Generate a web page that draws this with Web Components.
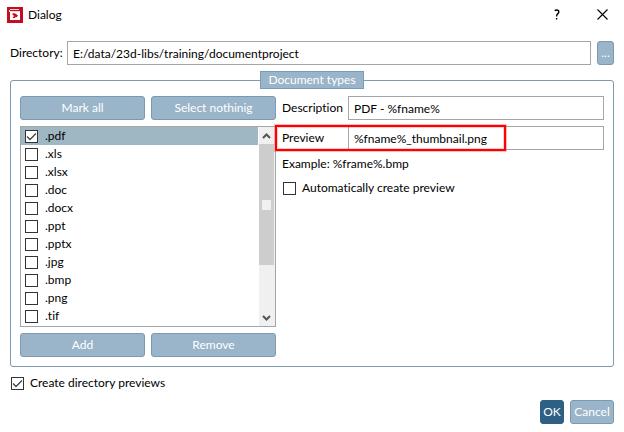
<!DOCTYPE html>
<html lang="en">
<head>
<meta charset="utf-8">
<title>Dialog</title>
<style>
html, body { margin: 0; height: 100%; background: #fff; }
body {
  font: 12px/16px Lato, "Open Sans", "Noto Sans", sans-serif; color: #000;
  font-variant-ligatures: none;
  --fill: #9ab4c9; --edge: #7a9ab1; --line: #a6a6a6;
}
</style>
</head>
<body>
<export-dialog></export-dialog>
<script>
const define = (name, html, setup) => {
  const template = document.createElement('template');
  template.innerHTML = '<style>*{box-sizing:border-box}</style>' + html;
  customElements.define(name, class extends HTMLElement {
    connectedCallback() {
      if (this.shadowRoot) return;
      const root = this.attachShadow({ mode: 'open' });
      root.append(template.content.cloneNode(true));
      if (setup) setup(this, root);
    }
  });
};

define('ui-button', `
<style>
:host { display: block; }
button { width: 100%; height: 24px; padding: 0; font: inherit; color: #fff; text-align: center;
  white-space: nowrap; background: var(--fill); border: 1px solid var(--edge); border-radius: 3px; }
:host([primary]) button { background: #2e6084; border-color: #2e6084; }
</style>
<button type="button"><slot></slot></button>`, (host, root) => {
  const label = host.getAttribute('label');
  if (label) root.querySelector('button').setAttribute('aria-label', label);
});

define('ui-check', `
<style>
:host { display: block; }
label { display: flex; align-items: center; gap: var(--check-gap, 6px); height: 18px; white-space: nowrap; }
input { appearance: none; width: 13px; height: 13px; margin: 0; border: 1px solid #333; background: #fff; }
span.box { display: grid; flex: none; }
span.box > * { grid-area: 1 / 1; }
svg { width: 13px; height: 13px; visibility: hidden; pointer-events: none; z-index: 1; }
input:checked + svg { visibility: visible; }
</style>
<label><span class="box"><input type="checkbox"><svg viewBox="0 0 13 13" aria-hidden="true"><path d="M2 6.5l3 3 6-6" fill="none" stroke="#444" stroke-width="1.3"/></svg></span><slot></slot></label>`,
(host, root) => { root.querySelector('input').checked = host.hasAttribute('checked'); });

define('ui-field', `
<style>
:host { display: block; }
.row { display: grid; grid-template-columns: var(--label-width, 60px) 1fr; column-gap: 6px; align-items: center; }
label { white-space: nowrap; }
input { width: 100%; min-width: 0; height: 24px; padding: 0 5px; font: inherit; font-variant-ligatures: inherit; color: inherit; background: #fff;
  border: 1px solid var(--line); border-radius: 0; outline: 0; }
</style>
<div class="row"><label for="f"></label><input id="f" type="text"></div>`, (host, root) => {
  root.querySelector('label').textContent = host.getAttribute('label');
  root.querySelector('input').value = host.getAttribute('value');
});

define('ui-titlebar', `
<style>
:host { display: flex; align-items: center; height: 29px; padding: 0 8px 0 7px; }
.logo { width: 16px; height: 16px; margin-right: 5px; }
.title { flex: 1; }
button { width: 28px; height: 28px; padding: 0; border: 0; background: none; display: grid; place-items: center; font: inherit; }
button:first-of-type { width: 62px; }
</style>
<svg class="logo" viewBox="0 0 16 16" aria-hidden="true"><path fill="#c30d20" d="M0 0h16v16H0z"/><path fill="#f6d5d8" d="M3 2h9v1H3zM2 3h1v2H2zM3 4h10v1H3z"/><path fill="#fff" d="M3 5h10v8H3z"/><path fill="#c30d20" d="M5 7l2-1 2 1 2 1.500L10 10H8.500L8 11H5.500L7 9z"/></svg>
<span class="title"><slot></slot></span>
<button type="button" aria-label="Help"><svg width="6" height="11" viewBox="0 0 6 11"><path d="M.7 1.600Q1.500 1 2.700 1Q4.800 1 4.800 2.800Q4.800 4 3.700 4.900Q2.600 5.800 2.600 7.500M2.600 9v1.500" fill="none" stroke="#000" stroke-width="1.400"/></svg></button>
<button type="button" aria-label="Close"><svg width="11" height="11" viewBox="0 0 11 11"><path d="M.5.5l10 10M10.500.5l-10 10" fill="none" stroke="#000" stroke-width="1.100"/></svg></button>`);

define('ui-group', `
<style>
:host { display: block; }
fieldset { margin: 0; min-width: 0; padding: 7px 9px 9px; border: 1px solid var(--edge); border-radius: 3px; }
legend { margin: 0 auto; padding: 0 7px; height: 18px; line-height: 16px; color: #fff; background: var(--fill); border: 1px solid var(--edge); }
</style>
<fieldset><legend></legend><slot></slot></fieldset>`, (host, root) => {
  root.querySelector('legend').textContent = host.getAttribute('caption');
});

define('type-list', `
<style>
:host { display: flex; border: 1px solid var(--line); }
ul { flex: 1; margin: 0; padding: 0 0 1px; list-style: none; }
li { padding-left: 4px; --check-gap: 7px; }
li.selected { background: #9fb6c3; margin-right: 1px; }
.bar { width: 16px; display: flex; flex-direction: column; background: #f0f0f0; padding-right: 1px; }
.bar svg { display: block; width: 15px; height: 17px; flex: none; }
.thumb { height: 121px; background: #cdcdcd; display: grid; place-items: center; }
.thumb i { width: 9px; height: 10px; background: #f0f0f0; }
.track { flex: 1; }
</style>
<ul></ul>
<div class="bar" aria-hidden="true">
<svg viewBox="0 0 15 17"><path d="M4 11l3.500-3.500L11 11" fill="none" stroke="#555" stroke-width="2"/></svg>
<div class="thumb"><i></i></div><div class="track"></div>
<svg viewBox="0 0 15 17"><path d="M4 7l3.500 3.500L11 7" fill="none" stroke="#555" stroke-width="2"/></svg>
</div>`, (host, root) => {
  const list = root.querySelector('ul');
  host.getAttribute('items').split(' ').forEach((name, i) => {
    const row = document.createElement('li');
    const check = document.createElement('ui-check');
    check.textContent = name;
    if (i === 0) { row.className = 'selected'; check.setAttribute('checked', ''); }
    row.append(check);
    list.append(row);
  });
});

define('ui-highlight', `
<style>
:host { display: block; position: relative; }
.frame { position: absolute; inset: -1px 98px -1px -7px; border: 2px solid #f00; box-shadow: 0 0 0 1px #ff000040, inset 0 0 0 1px #ff000030; pointer-events: none; }
</style>
<slot></slot><div class="frame"></div>`);

define('export-dialog', `
<style>
:host { display: block; }
main { padding: 12px 10px 9px; }
.directory { display: grid; grid-template-columns: 1fr 17px; gap: 6px; --label-width: 51px; margin-bottom: 6px; }
.columns { display: grid; grid-template-columns: 256fr 322fr; gap: 6px; align-items: start; }
.left { display: grid; grid-template-columns: 1fr 1fr; gap: 6px; }
type-list { grid-column: 1 / -1; }
.right { display: grid; gap: 6px; }
p { margin: 0; padding-bottom: 1px; }
.right > ui-check { padding-left: 1px; }
.create { padding: 7px 0 8px 1px; }
footer { display: grid; grid-template-columns: 24px 44px; gap: 6px; justify-content: end; }
</style>
<ui-titlebar>Dialog</ui-titlebar>
<main>
<div class="directory"><ui-field label="Directory:" value="E:/data/23d-libs/training/documentproject"></ui-field><ui-button label="Browse">...</ui-button></div>
<ui-group caption="Document types">
<div class="columns">
<div class="left">
<ui-button>Mark all</ui-button><ui-button>Select nothinig</ui-button>
<type-list items=".pdf .xls .xlsx .doc .docx .ppt .pptx .jpg .bmp .png .tif"></type-list>
<ui-button>Add</ui-button><ui-button>Remove</ui-button>
</div>
<div class="right">
<ui-field label="Description" value="PDF - %fname%"></ui-field>
<ui-highlight><ui-field label="Preview" value="%fname%_thumbnail.png"></ui-field></ui-highlight>
<p>Example: %frame%.bmp</p>
<ui-check>Automatically create preview</ui-check>
</div>
</div>
</ui-group>
<ui-check class="create" checked>Create directory previews</ui-check>
<footer><ui-button primary>OK</ui-button><ui-button>Cancel</ui-button></footer>
</main>`);
</script>
</body>
</html>
